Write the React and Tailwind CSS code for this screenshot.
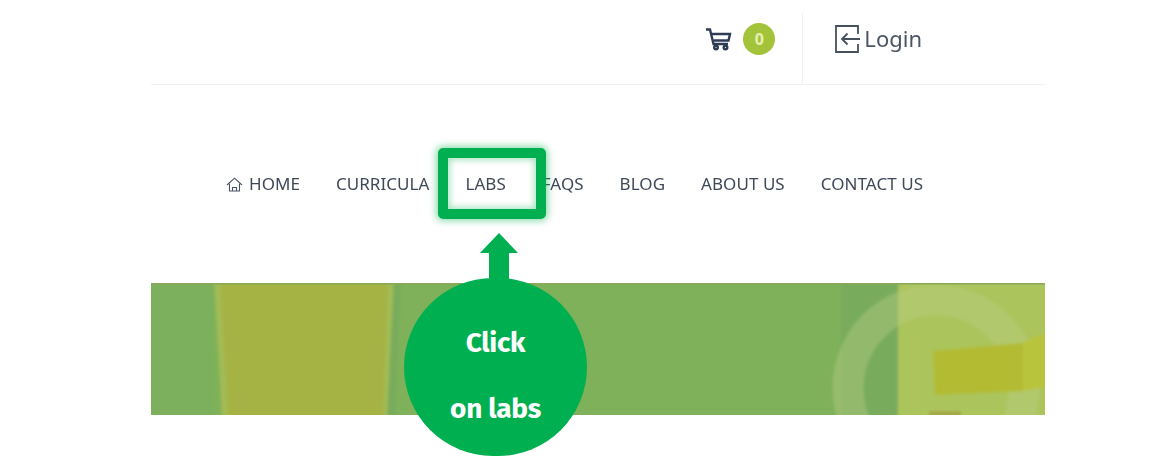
import React from 'react';

const links = ['CURRICULA', 'LABS', 'FAQS', 'BLOG', 'ABOUT US', 'CONTACT US'];

const CartIcon = () => (
  <svg width="26" height="23" viewBox="0 0 26 23" fill="none" stroke="#2f3c55" strokeWidth="2.4">
    <path d="M0 1.5h4l3.5 14.5h14.5" />
    <path d="M5.5 6h18.5l-1.5 6.5H7.5" />
    <circle cx="10" cy="19.5" r="1.8" />
    <circle cx="19.5" cy="19.5" r="1.8" />
  </svg>
);

const LoginIcon = () => (
  <svg width="26" height="28" viewBox="0 0 26 28" fill="none" stroke="#46505f" strokeWidth="1.8">
    <path d="M23 9V1H1v26h22v-8" />
    <path d="M25 14H7M12.5 8.5 7 14l5.5 5.5" />
  </svg>
);

const HomeIcon = () => (
  <svg width="17" height="15" viewBox="0 0 17 15" fill="none" stroke="#4a5262" strokeWidth="1.1">
    <path d="M1 8 8.5 1.2 16 8" />
    <path d="M3.5 6.5V14h10V6.5" />
    <path d="M6.5 14v-3.5h4V14" />
  </svg>
);

// blurred hero image from the site, only roughly shapes
const BannerArt = () => (
  <svg className="block w-full h-full" viewBox="0 0 894 132" preserveAspectRatio="none">
    <defs>
      <filter id="soft" x="-5%" y="-5%" width="110%" height="110%">
        <feGaussianBlur stdDeviation="1.5" />
      </filter>
      <clipPath id="frame">
        <rect width="894" height="132" />
      </clipPath>
    </defs>
    <rect width="894" height="132" fill="#7eb159" />
    <g clipPath="url(#frame)">
      <g filter="url(#soft)">
        <rect x="-5" y="-5" width="67" height="142" fill="#7cb05c" />
        <path d="M242 -5h8l-6 142h-8z" fill="#78ac5c" />
        <path d="M63 -5h180l-7 142H71z" fill="#a3bb55" />
        <path d="M69 -5h168l-5 142H77z" fill="#a5b345" />
        <rect x="690" y="-5" width="57" height="142" fill="#78ac5c" />
        <rect x="747" y="-5" width="152" height="142" fill="#abc45c" />
        <circle cx="785" cy="105" r="88" fill="none" stroke="#b9cc84" strokeOpacity="0.42" strokeWidth="31" />
        <path d="M870 60 899 48v56l-29 4z" fill="#b9c43c" />
        <path d="M782 68 872 60v48l-88 4z" fill="#b2bb30" />
        <rect x="778" y="128" width="32" height="8" fill="#a4a94a" />
      </g>
    </g>
    <rect width="894" height="1.5" fill="#8aa75a" />
  </svg>
);

export default function App() {
  return (
    <div className="relative w-full h-[463px] overflow-hidden bg-white font-['Noto_Sans',sans-serif]">
      <div className="w-[894px] ml-[151px]">
        {/* Top bar */}
        <header className="flex justify-end h-[85px] border-b border-[#f0f0f0]">
          <div className="flex items-center gap-[11px] h-[78px] pr-[27px]">
            <CartIcon />
            <span className="flex items-center justify-center w-8 h-8 rounded-full bg-[#a3c43a] text-[#e8efb0] text-base font-bold">0</span>
          </div>
          <div className="flex items-center gap-[3px] self-end h-[71px] pl-8 pr-[123px] pb-[20px] border-l border-[#f2f2f2]">
            <LoginIcon />
            <span className="text-[22px] text-[#4b5565] blur-[0.3px]">Login</span>
          </div>
        </header>

        {/* Nav, centred on the page and not on the 894px column */}
        <nav className="flex items-center justify-center gap-9 h-[198px] pr-[47px] text-[#3f4859] text-[17px] tracking-[0.05px] blur-[0.3px]">
          <span className="flex items-center gap-[6px]"><HomeIcon />HOME</span>
          {links.map((link) => (
            <span key={link}>{link}</span>
          ))}
        </nav>

        {/* Banner */}
        <div className="h-[132px]">
          <BannerArt />
        </div>
      </div>

      {/* Tutorial callout */}
      <div className="absolute left-[438px] top-[148px] w-[108px] h-[71px] rounded-[5px] border-[10px] border-[#00b050] shadow-[0_0_7px_2px_rgba(0,176,80,0.45),inset_0_0_6px_2px_rgba(0,176,80,0.35)]" />
      <svg className="absolute left-[480px] top-[233px]" width="38" height="50" viewBox="0 0 38 50">
        <path d="M19 0 38 20H29V50H9V20H0z" fill="#00b050" />
      </svg>
      <div className="absolute left-[404px] top-[278px] w-[183px] h-[178px] pt-4 rounded-full bg-[#00b050] flex flex-col items-center justify-center gap-[27px] text-white text-[28px] font-bold leading-[39px] tracking-[-0.3px] font-['Fira_Sans','Noto_Sans',sans-serif]">
        <span>Click</span>
        <span>on labs</span>
      </div>
    </div>
  );
}
